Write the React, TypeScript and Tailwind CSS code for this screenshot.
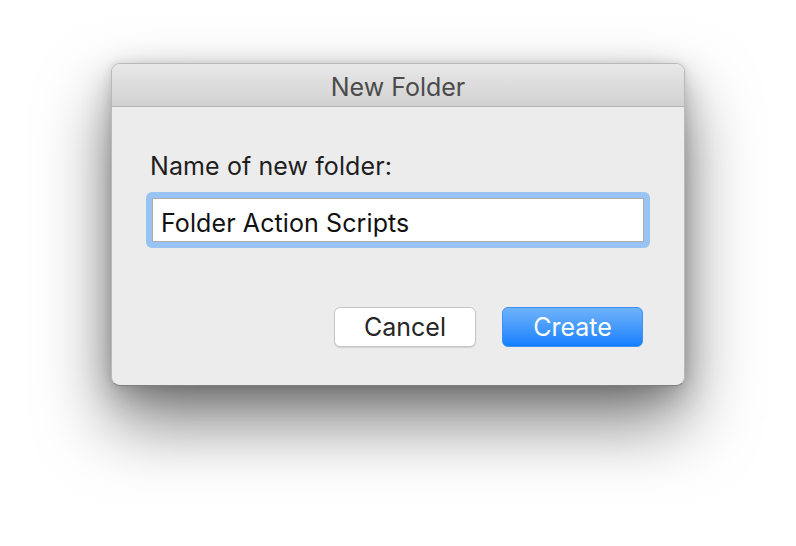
export default function App() {
  return (
    <div className="w-[796px] h-[546px] bg-white pt-[63px] pl-[111px] font-['Inter','Helvetica_Neue','Liberation_Sans',sans-serif]">
      <div className="w-[574px] h-[323px] rounded-[9px] bg-[#ececec] border border-[#b9b9b9] border-b-[#7f7f7f] overflow-hidden shadow-[0_36px_70px_rgba(0,0,0,0.5),0_10px_30px_rgba(0,0,0,0.2),0_0_10px_rgba(0,0,0,0.1)] flex flex-col">
        {/* Title bar */}
        <div className="h-[43px] shrink-0 flex items-center justify-center bg-gradient-to-b from-[#e9e8e9] to-[#d2d1d2] border-b border-[#b3b3b3]">
          <span className="text-[25px] leading-[30px] text-[#4b4b4b] mt-[3px]">New Folder</span>
        </div>

        {/* Body */}
        <div className="flex-1 px-[34px] pt-[44px]">
          <div className="text-[25px] leading-[30px] text-[#1e1e1e] pl-[4px] tracking-[0.1px]">
            Name of new folder:
          </div>
          <div className="mt-[11px] w-[504px] rounded-[6px] bg-[#98c3f2] p-[6px]">
            <div className="h-[44px] bg-white border border-[#acacac] flex items-center px-[8px]">
              <span className="text-[25px] leading-[30px] text-[#111] mt-[5px] tracking-[0.1px]">Folder Action Scripts</span>
            </div>
          </div>

          <div className="flex justify-end gap-[26px] mt-[59px] pr-[7px]">
            <button className="w-[142px] h-[40px] rounded-[6px] bg-white border border-[#c6c6c6] shadow-[0_1px_1px_rgba(0,0,0,0.12)] text-[25px] leading-[30px] text-[#262626]">
              Cancel
            </button>
            <button className="w-[141px] h-[40px] rounded-[6px] bg-gradient-to-b from-[#6db3fa] to-[#0f7ffd] border border-[#3d8ff5] text-[25px] leading-[30px] text-white">
              Create
            </button>
          </div>
        </div>
      </div>
    </div>
  )
}
